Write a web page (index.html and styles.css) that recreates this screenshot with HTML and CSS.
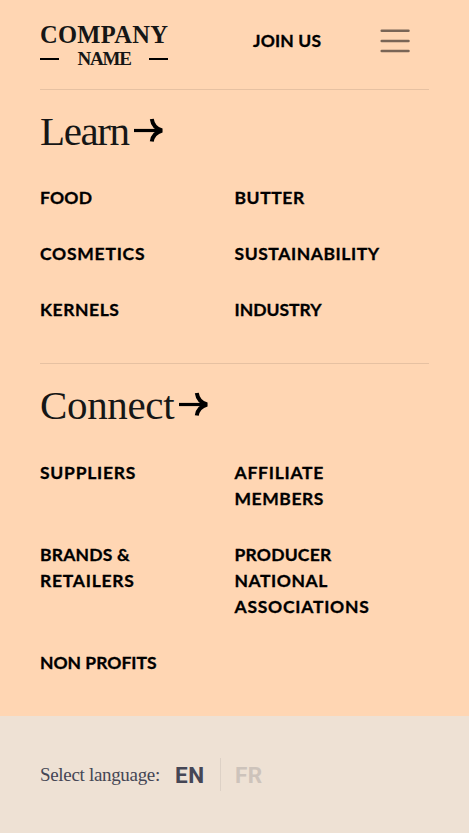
FILE: index.html
```html
<!DOCTYPE html>
<html lang="en">
<head>
<meta charset="utf-8">
<title>Menu</title>
<link rel="stylesheet" href="styles.css">
</head>
<body>
<div class="menu">
  <header class="header">
    <a class="logo">
      <span class="logo-top">COMPANY</span>
      <span class="logo-bottom"><span class="logo-name">NAME</span></span>
    </a>
    <a class="join">JOIN US</a>
    <svg class="burger" width="30" height="24" viewBox="0 0 30 24"><path d="M1.7 1.8h26.8M1.7 12h26.8M1.7 22h26.8"/></svg>
  </header>
  <section class="section learn">
    <h2 class="title"><span class="title-learn">Learn</span><svg class="arrow" width="30" height="26" viewBox="0 0 30 26"><path d="M0 13.5H26"/><path class="head" d="M17.8 2C18.5 7 21 11.5 28 13.5C21 15.5 18.5 19.5 17.8 24.5"/></svg></h2>
    <nav class="links">
      <a class="mid">FOOD</a><a class="wide">BUTTER</a>
      <a class="wider">COSMETICS</a><a class="wide">SUSTAINABILITY</a>
      <a class="wide">KERNELS</a><a class="snug">INDUSTRY</a>
    </nav>
  </section>
  <section class="section connect">
    <h2 class="title"><span class="title-connect">Connect</span><svg class="arrow" width="30" height="26" viewBox="0 0 30 26"><path d="M0 13.5H26"/><path class="head" d="M17.8 2C18.5 7 21 11.5 28 13.5C21 15.5 18.5 19.5 17.8 24.5"/></svg></h2>
    <nav class="links">
      <a class="wider">SUPPLIERS</a><a><span class="wider">AFFILIATE</span><br><span class="wide">MEMBERS</span></a>
      <a><span class="mid">BRANDS &amp;</span><br><span class="wider">RETAILERS</span></a><a><span class="mid">PRODUCER</span><br><span class="wide">NATIONAL</span><br><span class="wider">ASSOCIATIONS</span></a>
      <a class="snug">NON PROFITS</a>
    </nav>
  </section>
</div>
<footer class="footer">
  <span class="label">Select language:</span>
  <a class="lang">EN</a>
  <a class="lang lang-off">FR</a>
</footer>
</body>
</html>
```
FILE: styles.css
```css
* { box-sizing: border-box; }
body { margin: 0; height: 833px; display: flex; flex-direction: column; background: #ffd6b3; color: #000; font-family: Lato, "Liberation Sans", sans-serif; overflow: hidden; }
.menu { height: 716px; padding: 0 40px; }
.header { height: 89px; display: flex; align-items: flex-start; }
.logo { width: 128px; padding-top: 22px; font-family: "Liberation Serif", serif; font-weight: 700; color: #161616; }
.logo-top { display: block; font-size: 24.5px; line-height: 26px; letter-spacing: 0.3px; white-space: nowrap; }
.logo-bottom { display: flex; align-items: center; justify-content: space-between; height: 22px; }
.logo-bottom::before, .logo-bottom::after { content: ""; width: 19px; height: 2px; background: #000; }
.logo-name { font-size: 19px; line-height: 22px; letter-spacing: -1.2px; }
.join { margin: 28px 0 0 85px; width: 69px; font-size: 17.5px; line-height: 26px; font-weight: 700; letter-spacing: 0.15px; white-space: nowrap; -webkit-text-stroke: 0.3px #000; }
.burger { margin: 29px 0 0 58px; fill: none; stroke: #796556; stroke-width: 2.5; stroke-linecap: round; }
.section { border-top: 1px solid #e6c1a2; }
.learn { height: 274px; }
.title { display: flex; align-items: flex-start; gap: 5px; margin: 0; height: 95px; padding-top: 17px; font: 400 41px/48px "Liberation Serif", serif; color: #161616; }
.connect .title { height: 96px; }
.title-learn { width: 89px; letter-spacing: -1.4px; }
.title-connect { width: 134px; letter-spacing: -0.35px; }
.arrow { margin-top: 10px; fill: none; stroke: #000; stroke-width: 3.2; }
.head { stroke-width: 4; stroke-linejoin: bevel; }
.links { display: grid; grid-template-columns: 194.5px 194.5px; row-gap: 30px; font-size: 17.5px; line-height: 26px; font-weight: 700; -webkit-text-stroke: 0.3px #000; }
.snug { letter-spacing: 0px; }
.mid { letter-spacing: 0.2px; }
.wide { letter-spacing: 0.56px; }
.wider { letter-spacing: 0.75px; }
.footer { height: 117px; padding-left: 40px; display: flex; align-items: center; background: #eee1d4; color: #454655; }
.label { width: 135px; font: 19px/26px "Liberation Serif", serif; letter-spacing: -0.32px; white-space: nowrap; }
.lang { width: 45px; padding-top: 1px; font: 700 22.5px/32px Roboto, sans-serif; letter-spacing: 0.5px; }
.lang-off { padding-left: 14px; border-left: 1px solid #ddd1c6; color: #cdc3bb; }
```
